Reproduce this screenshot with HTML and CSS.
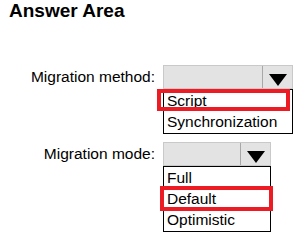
FILE: index.html
```html
<!DOCTYPE html>
<html lang="en">
<head>
    <meta charset="UTF-8">
    <title>Answer Area</title>
    <link rel="stylesheet" href="styles.css">
</head>
<body>
    <h2 class="title">Answer Area</h2>

    <div class="answers">
        <div class="field">
            <span class="field-label">Migration method:</span>
            <div class="dropdown dropdown-method">
                <div class="dropdown-box">
                    <span class="dropdown-value"></span>
                    <span class="dropdown-toggle">
                        <svg width="18" height="12" viewBox="0 0 18 12"><path d="M0 0H18L9 12Z" fill="#000"/></svg>
                    </span>
                </div>
                <ul class="options">
                    <li class="option selected">Script<span class="highlight"></span></li>
                    <li class="option">Synchronization</li>
                </ul>
            </div>
        </div>

        <div class="field">
            <span class="field-label">Migration mode:</span>
            <div class="dropdown dropdown-mode">
                <div class="dropdown-box">
                    <span class="dropdown-value"></span>
                    <span class="dropdown-toggle">
                        <svg width="18" height="12" viewBox="0 0 18 12"><path d="M0 0H18L9 12Z" fill="#000"/></svg>
                    </span>
                </div>
                <ul class="options">
                    <li class="option">Full</li>
                    <li class="option selected">Default<span class="highlight"></span></li>
                    <li class="option">Optimistic</li>
                </ul>
            </div>
        </div>
    </div>
</body>
</html>
```

FILE: styles.css
```css
body {
    margin: 0;
    background: #fff;
    color: #000;
    font-family: "Liberation Sans", Arial, sans-serif;
}
.title {
    margin: 0;
    padding-left: 9px;
    font-size: 19px;
    line-height: 22px;
    font-weight: bold;
}
.answers {
    margin-top: 43px;
    display: flex;
    flex-direction: column;
    gap: 8px;
}
.field {
    display: flex;
    align-items: flex-start;
}
.field-label {
    width: 155px;
    margin-right: 8px;
    text-align: right;
    font-size: 15.5px;
    line-height: 24px;
}
.dropdown {
    width: 130px;
}
.dropdown-mode {
    width: 108px;
}
.dropdown-box {
    display: flex;
    height: 24px;
    box-sizing: border-box;
    border: 1px solid #c9c9c9;
    background: #e3e3e3;
}
.dropdown-value {
    flex: 1;
    border-right: 1px solid #a8a8a8;
}
.dropdown-toggle {
    width: 29px;
    display: flex;
    justify-content: center;
    align-items: flex-start;
    padding-top: 8px;
    box-sizing: border-box;
}
.options {
    list-style: none;
    margin: 0;
    padding: 0 0 1px;
    border: 1px solid #000;
    background: #fff;
}
.option {
    position: relative;
    padding-left: 3px;
    font-size: 15.5px;
    line-height: 21px;
    white-space: nowrap;
}
.highlight {
    position: absolute;
    top: -1px;
    bottom: 0;
    border: 4px solid #ed1c24;
}
.dropdown-method .highlight {
    left: -7px;
    right: 2px;
}
.dropdown-mode .highlight {
    top: -2px;
    bottom: -2px;
    left: -4px;
    right: -3px;
}
```
